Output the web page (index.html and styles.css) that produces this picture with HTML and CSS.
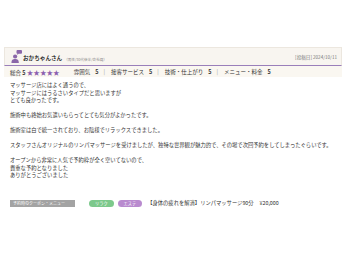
FILE: index.html
```html
<!DOCTYPE html>
<html lang="ja">
<head>
    <meta charset="UTF-8">
    <meta name="viewport" content="width=device-width, initial-scale=1.0">
    <title>口コミ</title>
    <link rel="stylesheet" href="styles.css">
</head>
<body>

    <div class="review">
        <div class="review-head">
            <div class="reviewer">
                <svg class="avatar" viewBox="0 0 12 14" width="11" height="13">
                    <rect x="6" y="0" width="6" height="4" rx="1" fill="#8b67a9"/>
                    <path d="M7 3.5 L7 5.5 L8.5 3.5 Z" fill="#8b67a9"/>
                    <circle cx="4.5" cy="7" r="2.3" fill="#8b67a9"/>
                    <path d="M0.5 14 C0.5 10.5 2 9.6 4.5 9.6 C7 9.6 8.5 10.5 8.5 14 Z" fill="#8b67a9"/>
                </svg>
                <span class="name">おかちゃんさん</span>
                <span class="attr">（男性/30代後半/会社員）</span>
            </div>
            <span class="date">[投稿日] 2024/10/11</span>
        </div>

        <div class="ratings">
            <span class="total">総合 <b>5</b> <span class="stars">★★★★★</span></span>
            <span class="item">雰囲気<b>5</b></span><span class="sep">|</span>
            <span class="item">接客サービス<b>5</b></span><span class="sep">|</span>
            <span class="item">技術・仕上がり<b>5</b></span><span class="sep">|</span>
            <span class="item">メニュー・料金<b>5</b></span>
        </div>

        <div class="body">
            <p>マッサージ店にはよく通うので、<br>マッサージにはうるさいタイプだと思いますが<br>とても良かったです。</p>
            <p>施術中も終始お気遣いもらってとても気分がよかったです。</p>
            <p>施術室は白で統一されており、お陰様でリラックスできました。</p>
            <p>スタッフさんオリジナルのリンパマッサージを受けましたが、独特な世界観が魅力的で、その場で次回予約をしてしまったぐらいです。</p>
            <p>オープンから非常に人気で予約枠が全く空いてないので、<br>貴重な予約となりました<br>ありがとうございました</p>
        </div>

        <div class="menu-row">
            <span class="label">予約時のクーポン・メニュー</span>
            <span class="tags">
                <span class="tag green">リラク</span>
                <span class="tag purple">エステ</span>
            </span>
            <span class="menu-name">【身体の疲れを解消】リンパマッサージ90分</span>
            <span class="price">¥20,000</span>
        </div>
    </div>

</body>
</html>
```

FILE: styles.css
```css
body{
    margin: 0;
    font-family: "Noto Sans CJK JP", "Noto Sans", sans-serif;
    color: #333;
    background: #fff;
}

.review{
    margin: 47px 7px 0 4px;
    font-size: 5.3px;
}

.review-head{
    display: flex;
    justify-content: space-between;
    align-items: flex-end;
    background-color: #f8f5f0;
    border: 1px solid #ece7df;
    border-bottom: 1.5px solid #9a7fba;
    padding: 2px 4px 2px 6px;
    height: 13px;
}

.reviewer{
    display: flex;
    align-items: flex-end;
}

.avatar{
    margin-right: 1px;
}

.name{
    font-weight: bold;
    font-size: 5.6px;
    margin-bottom: 1px;
}

.attr{
    font-size: 3.6px;
    color: #888;
    margin-left: 2px;
    margin-bottom: 1.5px;
}

.date{
    font-size: 4.6px;
    color: #777;
    align-self: center;
}

.ratings{
    display: flex;
    align-items: center;
    background-color: #faf7f1;
    padding: 0 6px;
    height: 11px;
    font-size: 5.5px;
}

.ratings b{
    font-weight: bold;
    margin-left: 5px;
}

.total b{
    margin-left: 0;
}

.total{
    margin-right: 14px;
}

.stars{
    color: #8b5fb0;
    font-size: 6.6px;
}

.sep{
    color: #999;
    margin: 0 6px 0 5px;
}

.body{
    padding: 5px 6px 0 6px;
    line-height: 7.5px;
}

.body p{
    margin: 0 0 7.5px 0;
}

.menu-row{
    display: flex;
    align-items: center;
    padding: 12px 6px 6px 6px;
}

.label{
    background-color: #a3a3a3;
    color: #fff;
    font-size: 4px;
    padding: 0 3px;
    height: 7px;
    line-height: 7px;
    width: 59px;
}

.tags{
    margin-left: 14px;
    display: flex;
    gap: 4px;
}

.tag{
    color: #fff;
    font-size: 4.2px;
    border-radius: 4px;
    padding: 0 6px;
    height: 7px;
    line-height: 7px;
}

.green{
    background-color: #7dc98c;
}

.purple{
    background-color: #b98bcf;
}

.menu-name{
    margin-left: 5px;
}

.price{
    margin-left: 6px;
}
```
